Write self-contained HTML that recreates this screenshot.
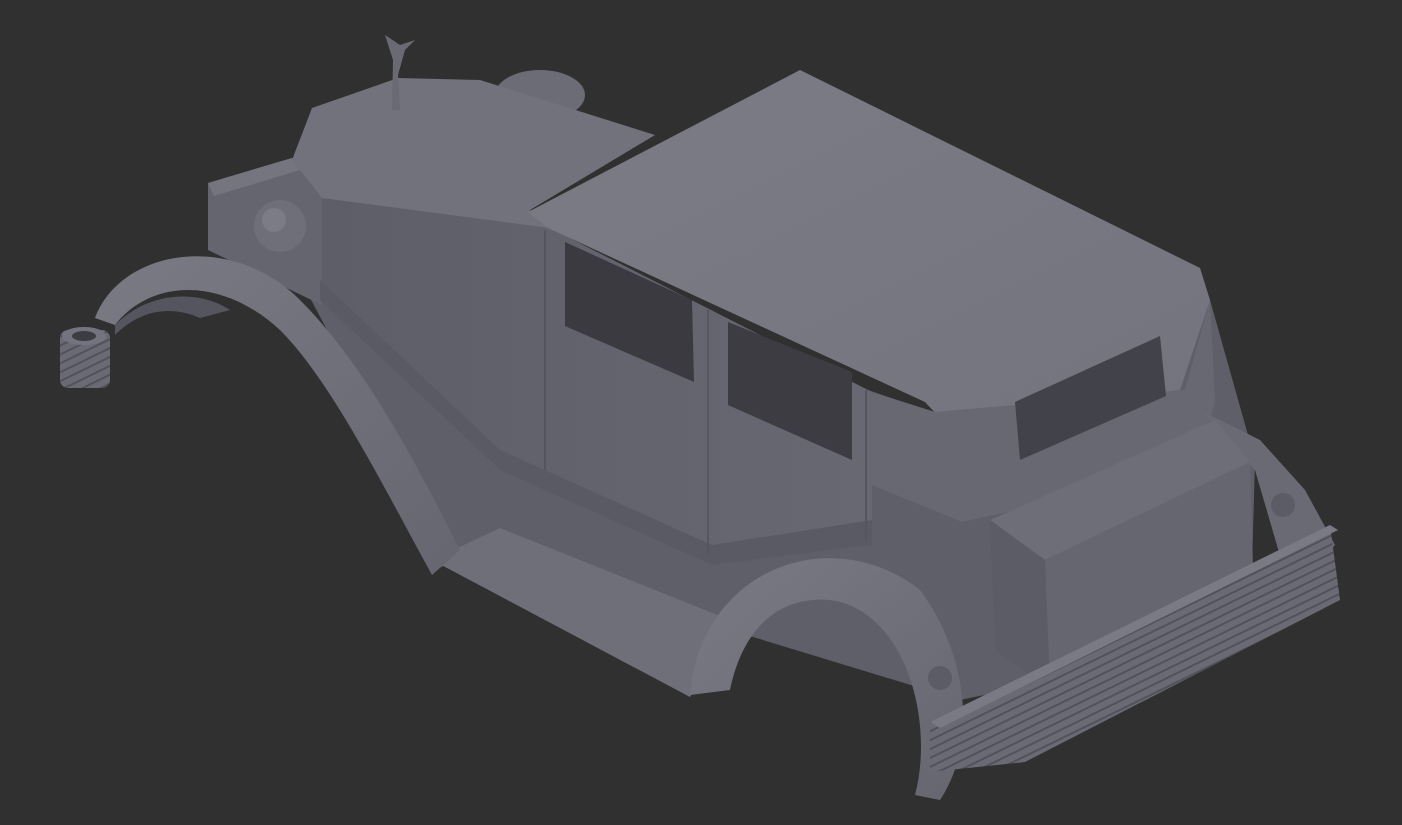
<!DOCTYPE html>
<html><head><meta charset="utf-8"><style>
html,body{margin:0;padding:0;background:#303030;width:1402px;height:825px;overflow:hidden}
svg{display:block}
</style></head><body>
<svg width="1402" height="825" viewBox="0 0 1402 825" xmlns="http://www.w3.org/2000/svg">
<defs>
<linearGradient id="roof" x1="0" y1="0" x2="1" y2="1"><stop offset="0" stop-color="#7c7c86"/><stop offset="1" stop-color="#74747e"/></linearGradient>
<linearGradient id="side" x1="0" y1="0" x2="1" y2="0"><stop offset="0" stop-color="#5e5e68"/><stop offset="1" stop-color="#686872"/></linearGradient>
<linearGradient id="fend" x1="0" y1="0" x2="1" y2="1"><stop offset="0" stop-color="#7a7a84"/><stop offset="1" stop-color="#666670"/></linearGradient>
<pattern id="stripe" width="8" height="8" patternUnits="userSpaceOnUse" patternTransform="rotate(-26)"><rect width="8" height="8" fill="#6a6a74"/><rect width="8" height="2" fill="#52525c"/></pattern>
</defs>
<!-- filler body -->
<polygon points="290,260 322,200 940,415 1210,300 1255,460 1250,640 960,700 730,630 500,540 435,570 380,430" fill="#5f5f69"/>
<!-- front radiator box -->
<polygon points="208,183 292,158 322,196 322,305 208,250" fill="#65656f"/>
<polygon points="208,183 292,158 300,170 214,196" fill="#75757f"/>
<ellipse cx="540" cy="95" rx="45" ry="25" fill="#6c6c76"/>
<!-- hood -->
<polygon points="292,160 312,108 398,78 480,80 655,135 530,210 550,228 480,285 322,198" fill="#72727c"/>
<!-- cab side -->
<polygon points="322,198 550,228 872,392 872,545 712,565 500,470 322,305" fill="url(#side)"/>
<polygon points="320,300 500,470 712,565 872,545 872,520 712,545 500,450 320,280" fill="#5a5a64"/>
<!-- roof -->
<polygon points="528,212 800,70 1200,268 1210,300 1180,390 940,418 925,402 548,228" fill="url(#roof)"/>
<!-- rear body -->
<polygon points="872,392 935,412 1185,390 1210,300 1215,402 1195,470 962,522 872,485" fill="#686872"/>
<!-- windows -->
<polygon points="565,242 692,300 694,382 565,326" fill="#3a3a40"/>
<polygon points="728,322 852,372 852,460 728,405" fill="#3c3c42"/>
<polygon points="1015,402 1160,336 1166,396 1020,460" fill="#42424a"/>
<polyline points="545,230 545,470" stroke="#55555f" stroke-width="2" fill="none"/>
<polyline points="708,310 708,555" stroke="#55555f" stroke-width="2" fill="none"/>
<polyline points="866,390 866,540" stroke="#55555f" stroke-width="2" fill="none"/>
<!-- rear right fender -->
<polygon points="1200,410 1260,440 1305,490 1335,545 1290,590 1255,470" fill="#6a6a74"/>
<!-- trunk -->
<polygon points="990,520 1215,420 1250,462 1045,560" fill="#6e6e78"/>
<polygon points="1045,560 1250,462 1255,640 1050,690" fill="#666670"/>
<polygon points="990,520 1045,560 1050,690 995,650" fill="#5c5c66"/>
<!-- running board -->
<polygon points="432,560 500,528 735,622 690,697" fill="#6f6f79"/>
<!-- front fender -->
<path d="M95,318 C120,250 230,230 300,300 C360,360 410,450 460,550 L432,575 C380,480 330,380 280,330 C220,275 150,280 115,325 Z" fill="url(#fend)"/>
<path d="M115,325 C150,290 200,290 230,310 L200,318 C170,305 140,310 115,335Z" fill="#55555f"/>
<!-- rear fender -->
<path d="M690,695 C700,570 830,520 920,590 C965,650 980,740 940,800 L915,795 C935,720 905,610 830,600 C770,595 740,640 730,690 Z" fill="url(#fend)"/>
<!-- rear bumper -->
<polygon points="930,722 1330,525 1340,600 1025,762 930,772" fill="url(#stripe)"/>
<polygon points="930,722 1330,525 1338,530 940,728" fill="#7a7a84"/>
<!-- front bumper coil -->
<rect x="60" y="330" width="50" height="58" rx="8" fill="url(#stripe)"/>
<ellipse cx="84" cy="336" rx="22" ry="9" fill="#747480"/>
<ellipse cx="84" cy="336" rx="12" ry="5" fill="#3c3c42"/>
<circle cx="280" cy="226" r="26" fill="#6f6f79"/>
<circle cx="274" cy="220" r="12" fill="#7c7c86"/>
<circle cx="1283" cy="505" r="12" fill="#5c5c66"/>
<circle cx="940" cy="678" r="12" fill="#5c5c66"/>
<path d="M392,110 L400,110 L398,75 L405,50 L415,40 L400,45 L385,35 L393,60 Z" fill="#6a6a74"/>
</svg>
</body></html>
